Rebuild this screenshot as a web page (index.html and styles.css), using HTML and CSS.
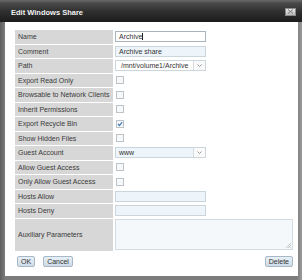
FILE: index.html
```html
<!DOCTYPE html>
<html>
<head>
<meta charset="utf-8">
<link rel="stylesheet" href="styles.css">
</head>
<body>
<div class="window">
  <div class="titlebar">
    <span class="title">Edit Windows Share</span>
    <span class="close"><svg width="7" height="5" viewBox="0 0 7 5"><path d="M1 0.5L6 4.5M6 0.5L1 4.5" stroke="#777" stroke-width="1" fill="none"/></svg></span>
  </div>
  <div class="content">
    <div class="form">
      <div class="label">Name</div>
      <div class="value"><div class="input focus">Archive<span class="caret"></span></div></div>

      <div class="label">Comment</div>
      <div class="value"><div class="input">Archive share</div></div>

      <div class="label">Path</div>
      <div class="value"><div class="select plain"><span class="sel-text">/mnt/volume1/Archive</span><span class="sel-btn"><svg width="5" height="3" viewBox="0 0 5 3"><path d="M0.5 0.5L2.5 2.5L4.5 0.5" stroke="#999" fill="none"/></svg></span></div></div>

      <div class="label">Export Read Only</div>
      <div class="value"><span class="check"></span></div>

      <div class="label">Browsable to Network Clients</div>
      <div class="value"><span class="check"></span></div>

      <div class="label">Inherit Permissions</div>
      <div class="value"><span class="check"></span></div>

      <div class="label">Export Recycle Bin</div>
      <div class="value"><span class="check checked"><svg width="6" height="6" viewBox="0 0 6 6"><path d="M1 3L2.5 4.5L5.2 1" stroke="#3d77b4" stroke-width="1.2" fill="none"/></svg></span></div>

      <div class="label">Show Hidden Files</div>
      <div class="value"><span class="check"></span></div>

      <div class="label">Guest Account</div>
      <div class="value"><div class="select"><span class="sel-text">www</span><span class="sel-btn"><svg width="5" height="3" viewBox="0 0 5 3"><path d="M0.5 0.5L2.5 2.5L4.5 0.5" stroke="#999" fill="none"/></svg></span></div></div>

      <div class="label">Allow Guest Access</div>
      <div class="value"><span class="check"></span></div>

      <div class="label">Only Allow Guest Access</div>
      <div class="value"><span class="check"></span></div>

      <div class="label">Hosts Allow</div>
      <div class="value"><div class="input"></div></div>

      <div class="label">Hosts Deny</div>
      <div class="value"><div class="input"></div></div>

      <div class="label">Auxiliary Parameters</div>
      <div class="value"><div class="textarea"><svg class="grip" width="6" height="6" viewBox="0 0 6 6"><path d="M6 1L1 6M6 3L3 6M6 5L5 6" stroke="#bbb" stroke-width="0.8"/></svg></div></div>
    </div>
    <div class="buttons">
      <span class="btn">OK</span>
      <span class="btn">Cancel</span>
      <span class="spacer"></span>
      <span class="btn">Delete</span>
    </div>
  </div>
</div>
</body>
</html>
```

FILE: styles.css
```css
html, body {
  margin: 0;
  padding: 0;
  background: #6e6e6e;
}
.window {
  width: 302px;
  height: 280px;
  background: linear-gradient(to right, #5e5e5e 0px, #7c7c7c 5px, #7c7c7c 297px, #9a9a9a 302px);
  font-family: "Liberation Sans", Arial, sans-serif;
  font-size: 7px;
  color: #333;
  display: flex;
  flex-direction: column;
}
.titlebar {
  height: 22px;
  flex: none;
  background: linear-gradient(to bottom, #6a6a6a 0px, #4a4a4a 3px, #2e2e2e 12px, #1c1c1c 22px);
  display: flex;
  align-items: center;
  padding: 0 6px 0 11px;
  box-sizing: border-box;
}
.title {
  color: #f2f2f2;
  font-weight: bold;
  font-size: 7.5px;
  flex: 1;
  padding-top: 2px;
}
.close {
  width: 11px;
  height: 8px;
  box-sizing: border-box;
  border: 1px solid #8a8a8a;
  background: linear-gradient(to bottom, #e8e8e8, #b8b8b8);
  display: flex;
  align-items: center;
  justify-content: center;
  margin-top: 1px;
}
.content {
  background: #fff;
  margin: 0 4px 4px 5px;
  flex: 1;
  padding: 8px 5px 0 10px;
  display: flex;
  flex-direction: column;
}
.form {
  display: grid;
  grid-template-columns: 98px 1fr;
  grid-template-rows: repeat(13, 13.5px) 32px;
  column-gap: 2px;
  row-gap: 1px;
}
.label {
  background: #d7d7d7;
  display: flex;
  align-items: center;
  padding-left: 3px;
  white-space: nowrap;
  color: #3a3a3a;
}
.value {
  display: flex;
  align-items: center;
}
.input {
  width: 91px;
  height: 11px;
  box-sizing: border-box;
  border: 1px solid #cbd5dc;
  background: #eef5fa;
  padding-left: 3px;
  line-height: 9px;
  color: #333;
}
.input.focus {
  background: #fff;
  border-color: #aab4bc;
}
.caret {
  display: inline-block;
  width: 1px;
  height: 7px;
  background: #222;
  vertical-align: -1px;
}
.select {
  width: 91px;
  height: 11px;
  box-sizing: border-box;
  border: 1px solid #cbd5dc;
  background: #eef5fa;
  display: flex;
}
.select.plain {
  background: #fff;
}
.sel-text {
  flex: 1;
  padding-left: 3px;
  line-height: 9px;
  white-space: nowrap;
  overflow: hidden;
}
.select.plain .sel-text {
  padding-left: 5px;
}
.sel-btn {
  width: 11px;
  border-left: 1px solid #d6dde2;
  background: #fafafa;
  display: flex;
  align-items: center;
  justify-content: center;
}
.check {
  width: 8px;
  height: 8px;
  box-sizing: border-box;
  border: 1px solid #bcc4ca;
  background: #f6f8fa;
  margin-left: 1px;
  display: flex;
  align-items: center;
  justify-content: center;
}
.textarea {
  width: 178px;
  height: 31px;
  box-sizing: border-box;
  border: 1px solid #d3dbe0;
  background: #f4f8fb;
  position: relative;
}
.grip {
  position: absolute;
  right: 1px;
  bottom: 1px;
}
.buttons {
  display: flex;
  align-items: center;
  margin-top: 5px;
  gap: 8px;
  padding-left: 2px;
}
.spacer {
  flex: 1;
}
.btn {
  height: 11px;
  box-sizing: border-box;
  border: 1px solid #a7b8c8;
  border-radius: 2px;
  background: linear-gradient(to bottom, #e9f0f6, #cddbe7);
  padding: 0 3px;
  line-height: 9px;
  color: #333;
  font-size: 7px;
}
```
